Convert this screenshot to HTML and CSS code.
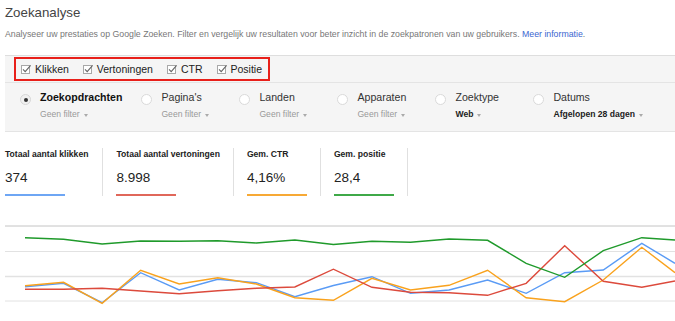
FILE: index.html
```html
<!DOCTYPE html>
<html lang="nl">
<head>
  <meta charset="UTF-8" />
  <title>Zoekanalyse</title>
  <link rel="stylesheet" href="styles.css">
</head>
<body>
  <section class="page">
    <h1 class="title">Zoekanalyse</h1>
    <p class="intro">Analyseer uw prestaties op Google Zoeken. Filter en vergelijk uw resultaten voor beter inzicht in de zoekpatronen van uw gebruikers. <a href="#">Meer informatie</a>.</p>

    <div class="metric-band">
      <div class="metric-toggles">
        <label class="check"><svg class="check-box" width="11" height="10" viewBox="0 0 11 10"><rect x="0.5" y="1.5" width="8" height="8" fill="#fff" stroke="#a8a8a8"/><path d="M2 5.3 L4.2 7.6 L9.6 1.4" fill="none" stroke="#666" stroke-width="1.1"/></svg>Klikken</label>
        <label class="check"><svg class="check-box" width="11" height="10" viewBox="0 0 11 10"><rect x="0.5" y="1.5" width="8" height="8" fill="#fff" stroke="#a8a8a8"/><path d="M2 5.3 L4.2 7.6 L9.6 1.4" fill="none" stroke="#666" stroke-width="1.1"/></svg>Vertoningen</label>
        <label class="check"><svg class="check-box" width="11" height="10" viewBox="0 0 11 10"><rect x="0.5" y="1.5" width="8" height="8" fill="#fff" stroke="#a8a8a8"/><path d="M2 5.3 L4.2 7.6 L9.6 1.4" fill="none" stroke="#666" stroke-width="1.1"/></svg>CTR</label>
        <label class="check"><svg class="check-box" width="11" height="10" viewBox="0 0 11 10"><rect x="0.5" y="1.5" width="8" height="8" fill="#fff" stroke="#a8a8a8"/><path d="M2 5.3 L4.2 7.6 L9.6 1.4" fill="none" stroke="#666" stroke-width="1.1"/></svg>Positie</label>
      </div>
    </div>

    <div class="dimensions">
      <div class="dim">
        <span class="radio radio-on"></span>
        <div>
          <div class="dim-name dim-name-active">Zoekopdrachten</div>
          <div class="dim-filter">Geen filter<span class="caret"></span></div>
        </div>
      </div>
      <div class="dim">
        <span class="radio"></span>
        <div>
          <div class="dim-name">Pagina's</div>
          <div class="dim-filter">Geen filter<span class="caret"></span></div>
        </div>
      </div>
      <div class="dim">
        <span class="radio"></span>
        <div>
          <div class="dim-name">Landen</div>
          <div class="dim-filter">Geen filter<span class="caret"></span></div>
        </div>
      </div>
      <div class="dim">
        <span class="radio"></span>
        <div>
          <div class="dim-name">Apparaten</div>
          <div class="dim-filter">Geen filter<span class="caret"></span></div>
        </div>
      </div>
      <div class="dim">
        <span class="radio"></span>
        <div>
          <div class="dim-name">Zoektype</div>
          <div class="dim-filter dim-filter-set">Web<span class="caret"></span></div>
        </div>
      </div>
      <div class="dim">
        <span class="radio"></span>
        <div>
          <div class="dim-name">Datums</div>
          <div class="dim-filter dim-filter-set">Afgelopen 28 dagen<span class="caret"></span></div>
        </div>
      </div>
    </div>

    <div class="totals">
      <div class="total">
        <div class="total-label">Totaal aantal klikken</div>
        <div class="total-value">374</div>
        <div class="total-bar bar-blue"></div>
      </div>
      <div class="total">
        <div class="total-label">Totaal aantal vertoningen</div>
        <div class="total-value">8.998</div>
        <div class="total-bar bar-red"></div>
      </div>
      <div class="total">
        <div class="total-label">Gem. CTR</div>
        <div class="total-value">4,16%</div>
        <div class="total-bar bar-orange"></div>
      </div>
      <div class="total">
        <div class="total-label">Gem. positie</div>
        <div class="total-value">28,4</div>
        <div class="total-bar bar-green"></div>
      </div>
    </div>

    <svg class="chart" width="670" height="111" viewBox="5 0 670 111">
      <line x1="5" y1="16" x2="675" y2="16" stroke="#c4c4c4" stroke-width="1"/>
      <line x1="5" y1="41.5" x2="675" y2="41.5" stroke="#e2e2e2" stroke-width="1"/>
      <line x1="5" y1="66.5" x2="675" y2="66.5" stroke="#e2e2e2" stroke-width="1.5"/>
      <line x1="5" y1="91" x2="675" y2="91" stroke="#e2e2e2" stroke-width="1"/>

      <polyline fill="none" stroke="#5a9bf5" stroke-width="1.4" points="25,76.7 63.55,73.3 102.1,92.7 140.65,62.7 179.2,80 217.75,69.3 256.3,72.7 294.85,86.7 333.4,75.5 371.95,66.7 410.5,83.3 449.05,80 487.6,70 526.15,83.3 564.7,62.7 603.25,60 641.8,33.3 675,53.3"/>
      <polyline fill="none" stroke="#f9a21d" stroke-width="1.4" points="25,75.7 63.55,72.3 102.1,93.3 140.65,60.3 179.2,74 217.75,67.7 256.3,74 294.85,87.7 333.4,90.3 371.95,68.3 410.5,80 449.05,75.3 487.6,60.3 526.15,87.7 564.7,91.7 603.25,70 641.8,37.3 675,62.7"/>
      <polyline fill="none" stroke="#dc4a3c" stroke-width="1.4" points="25,79.3 63.55,79.3 102.1,78.3 140.65,81 179.2,83.7 217.75,80.7 256.3,78.3 294.85,77 333.4,59.2 371.95,77.3 410.5,82.3 449.05,82.7 487.6,85.3 526.15,73.3 564.7,35.7 603.25,71.3 641.8,77.3 675,71"/>
      <polyline fill="none" stroke="#1f9a2b" stroke-width="1.4" points="25,27.7 63.55,29.3 102.1,34 140.65,31 179.2,31.3 217.75,30.7 256.3,33 294.85,30 333.4,34.5 371.95,31.3 410.5,32.3 449.05,29 487.6,30.3 526.15,53.3 564.7,67.3 603.25,40.7 641.8,27.7 675,30"/>
    </svg>
  </section>
</body>
</html>
```

FILE: styles.css
```css
body {
  margin: 0;
  font-family: 'Liberation Sans', Arial, sans-serif;
  background: #fff;
  color: #222;
}

.page {
  padding: 5px 0 0 5px;
}

.title {
  margin: 0;
  font-size: 13.3px;
  line-height: 16px;
  font-weight: normal;
  color: #444;
}

.intro {
  margin: 8px 0 0;
  font-size: 8.75px;
  line-height: 10px;
  color: #777;
}

.intro a {
  color: #3b66d0;
  text-decoration: none;
}

/* gray bands */
.metric-band {
  margin-top: 16px;
  background: #f5f5f5;
  border-top: 1px solid #dedede;
  border-bottom: 1px solid #e4e4e4;
  padding: 1px 0 0 9px;
  height: 25px;
}

.metric-toggles {
  display: inline-flex;
  align-items: center;
  gap: 14px;
  height: 20px;
  padding: 0 6px 0 5px;
  border: 2px solid #e8201a;
}

.check {
  display: flex;
  align-items: center;
  font-size: 10.5px;
  line-height: 13px;
  color: #222;
}

.check-box {
  margin-right: 3px;
}

.dimensions {
  display: flex;
  background: #f5f5f5;
  border-bottom: 1px solid #e4e4e4;
  padding: 8px 0 0 15px;
  height: 40px;
}

.dim {
  display: flex;
  align-items: flex-start;
  min-width: 79px;
  margin-right: 19px;
}

.radio {
  width: 9px;
  height: 9px;
  margin: 3px 9px 0 0;
  border: 1px solid #dadada;
  border-radius: 50%;
  background: #fff;
  position: relative;
  flex-shrink: 0;
}

.radio-on {
  background: #f0f0f0;
  border-color: #d6d6d6;
}

.radio-on::after {
  content: "";
  position: absolute;
  left: 2.5px;
  top: 2.5px;
  width: 4px;
  height: 4px;
  border-radius: 50%;
  background: #333;
}

.dim-name {
  font-size: 10.6px;
  line-height: 13px;
  color: #333;
}

.dim-name-active {
  font-weight: bold;
  color: #111;
}

.dim-filter {
  margin-top: 5px;
  font-size: 8.6px;
  line-height: 11px;
  color: #999;
  display: flex;
  align-items: center;
}

.dim-filter-set {
  font-weight: bold;
  color: #222;
}

.caret {
  margin-left: 4px;
  margin-top: 1px;
  border-left: 2px solid transparent;
  border-right: 2px solid transparent;
  border-top: 3px solid #aaa;
}

/* totals */
.totals {
  display: flex;
  margin-top: 16px;
}

.total {
  padding: 0 13px;
  border-right: 1px solid #e0e0e0;
}

.total:first-child {
  padding: 0 14px 0 0;
}

.total-label {
  padding-top: 1px;
  font-size: 8.6px;
  line-height: 11px;
  font-weight: bold;
  color: #222;
}

.total-value {
  margin-top: 10px;
  font-size: 13.5px;
  line-height: 16px;
  color: #222;
}

.total-bar {
  width: 60px;
  height: 2px;
  margin-top: 8px;
}

.bar-blue { background: #6ea6f4; }
.bar-red { background: #e0675a; }
.bar-orange { background: #f7a935; }
.bar-green { background: #3fa948; }

.chart {
  display: block;
  margin-top: 14px;
}
```
